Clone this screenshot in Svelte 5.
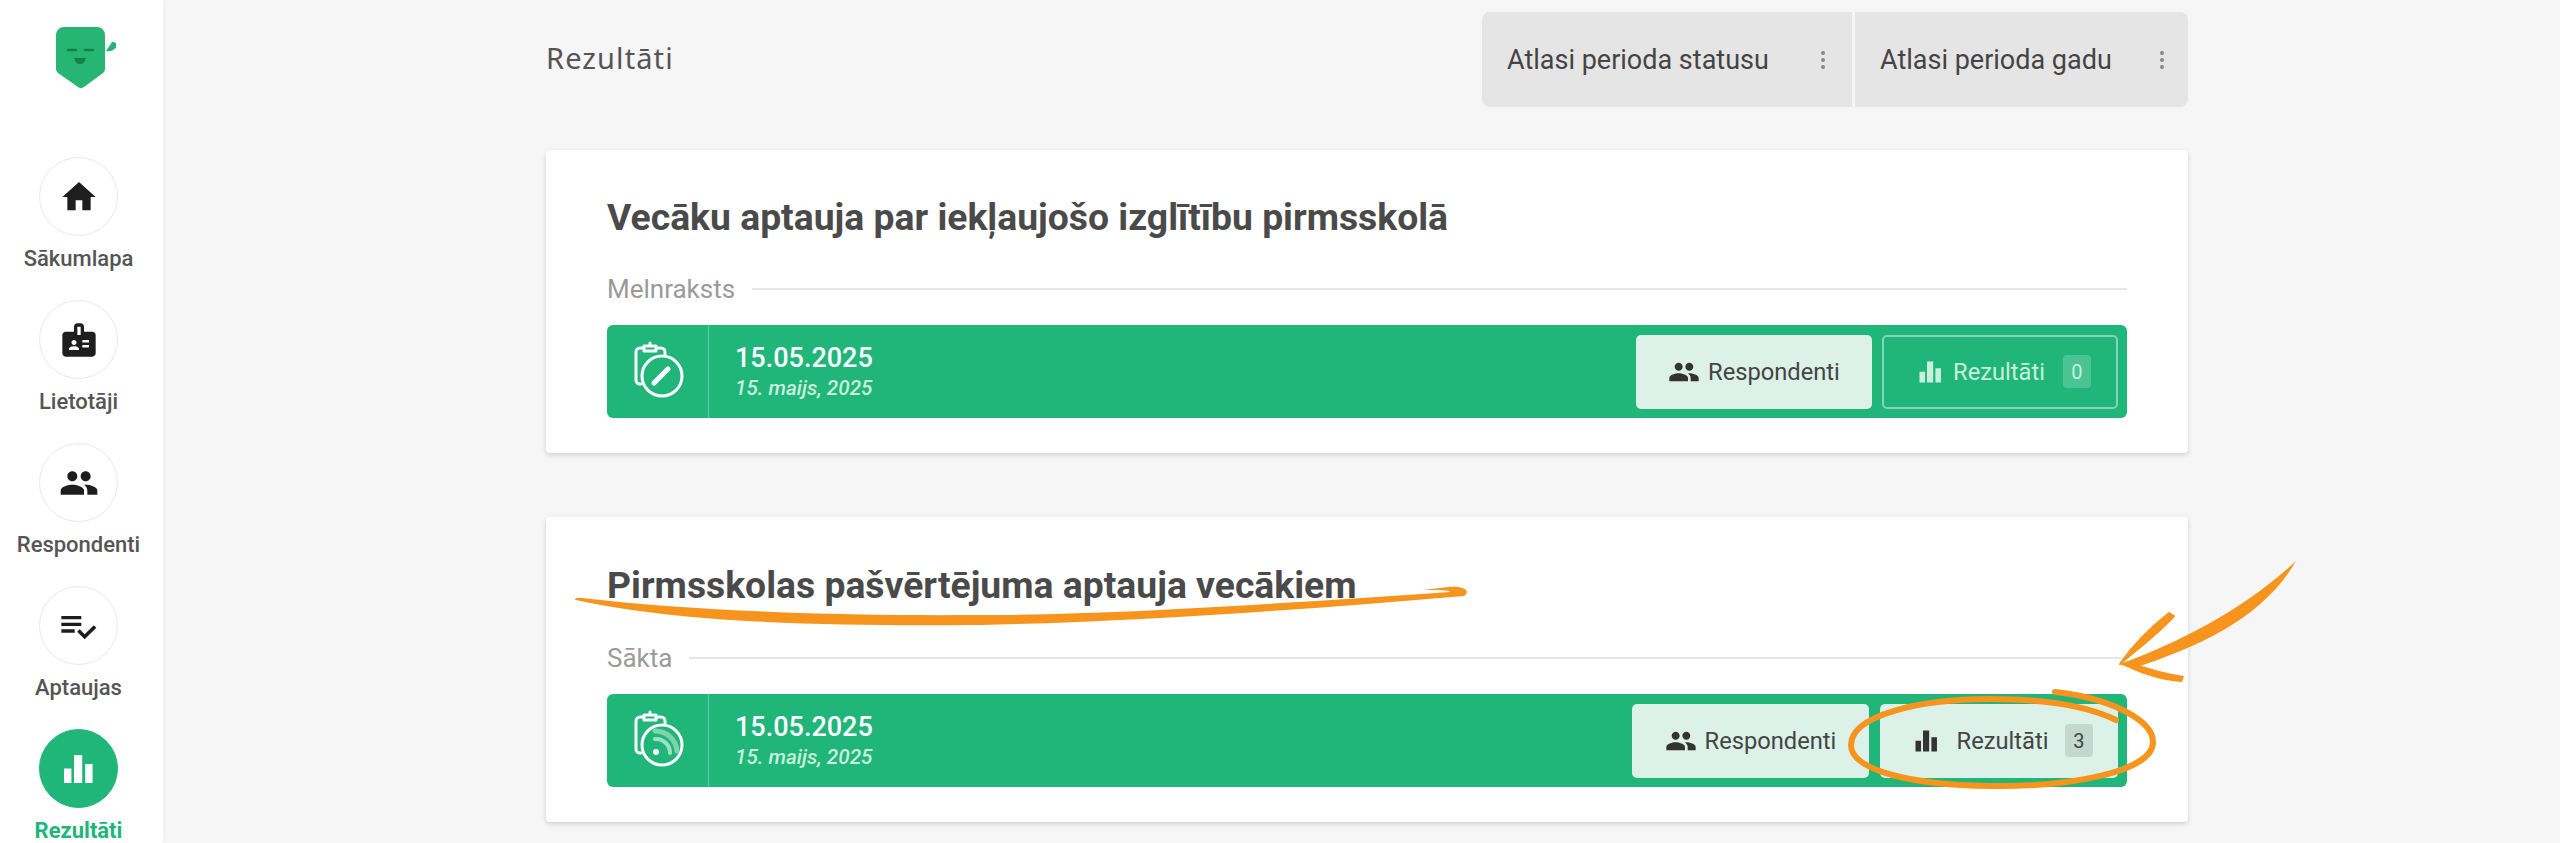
<script>
  const chart = 'M5 11.8h3.7V19H5zM10 5h4.1v14H10zM15.6 9.5h3.7V19h-3.7z'
  const people = 'M16 11c1.66 0 2.99-1.34 2.99-3S17.66 5 16 5c-1.66 0-3 1.34-3 3s1.34 3 3 3zm-8 0c1.66 0 2.99-1.34 2.99-3S9.66 5 8 5C6.34 5 5 6.34 5 8s1.34 3 3 3zm0 2c-2.33 0-7 1.17-7 3.5V19h14v-2.5c0-2.33-4.67-3.5-7-3.5zm8 0c-.29 0-.62.02-.97.05 1.16.84 1.97 1.97 1.97 3.45V19h6v-2.5c0-2.33-4.67-3.5-7-3.5z'

  const nav = [
    { label: 'Sākumlapa', d: 'M10 20v-6h4v6h5v-8h3L12 3 2 12h3v8z' },
    { label: 'Lietotāji', d: 'M20 7h-5V4c0-1.1-.9-2-2-2h-2c-1.1 0-2 .9-2 2v3H4c-1.1 0-2 .9-2 2v11c0 1.1.9 2 2 2h16c1.1 0 2-.9 2-2V9c0-1.1-.9-2-2-2zM9 12c.83 0 1.5.67 1.5 1.5S9.83 15 9 15s-1.5-.67-1.5-1.5S8.17 12 9 12zm3 6H6v-.75c0-1 2-1.5 3-1.5s3 .5 3 1.5V18zm1-9h-2V4h2v5zm5 7.5h-4V15h4v1.5zm0-3h-4V12h4v1.5z' },
    { label: 'Respondenti', d: people },
    { label: 'Aptaujas', d: 'M14 10H2v2h12v-2zm0-4H2v2h12V6zM2 16h8v-2H2v2zm19.5-4.5L23 13l-6.99 7-4.51-4.5L13 14l3.01 3 5.49-5.5z' },
    { label: 'Rezultāti', d: chart, active: true }
  ]

  const surveys = [
    { title: 'Vecāku aptauja par iekļaujošo izglītību pirmsskolā', status: 'Melnraksts', kind: 'draft', count: 0 },
    { title: 'Pirmsskolas pašvērtējuma aptauja vecākiem', status: 'Sākta', kind: 'started', count: 3 }
  ]
</script>

<div class="page">
  <aside class="sidebar">
    <svg class="logo" viewBox="0 0 60 62" width="60" height="62" aria-hidden="true">
      <path d="M8 0h33a8 8 0 0 1 8 8v34a5 5 0 0 1-2 4L28 60a5 5 0 0 1-6 0L2 46a5 5 0 0 1-2-4V8a8 8 0 0 1 8-8z" fill="#26b573" />
      <path d="M50 24l6-9c3 0 5 1 5 4-2 4-6 6-11 5z" fill="#26b573" />
      <path d="M12 23h8M29 23h8" stroke="#17804f" stroke-width="2.4" stroke-linecap="round" fill="none" />
      <path d="M18 31h12c-1 4-3 6-6 6s-5-2-6-6z" fill="#17804f" />
    </svg>
    <nav>
      {#each nav as item}
        <a class="nav-item" class:active={item.active} href="#top">
          <span class="circle">
            <svg viewBox="0 0 24 24" aria-hidden="true"><path d={item.d} /></svg>
          </span>
          <span class="nav-label">{item.label}</span>
        </a>
      {/each}
    </nav>
  </aside>

  <main>
    <header>
      <h1>Rezultāti</h1>
      <div class="filters">
        <button class="filter status">Atlasi perioda statusu <i class="dots"></i></button>
        <button class="filter year">Atlasi perioda gadu <i class="dots"></i></button>
      </div>
    </header>

    {#each surveys as s}
      <section class="card" class:started={s.kind === 'started'}>
        <h2>{s.title}</h2>
        <div class="status-row">
          <span>{s.status}</span>
          <hr />
        </div>
        <div class="bar">
          <div class="bar-icon">
            <svg viewBox="0 0 60 60" width="60" height="60" fill="none" stroke="#fff" stroke-width="3" stroke-linecap="round" stroke-linejoin="round" aria-hidden="true">
              <path d="M11 45H10a4 4 0 0 1-4-4V13a4 4 0 0 1 4-4h3M27 9h4a4 4 0 0 1 4 4v2" />
              <path d="M14 7h12v5H14zM20 6V4" />
              <circle cx="32" cy="37" r="20" />
              {#if s.kind === 'draft'}
                <path d="M24 44l14-14" stroke-width="5" />
              {:else}
                <path d="M25 31a14 14 0 0 1 15 14" stroke="#9fe0c2" stroke-width="4" />
                <path d="M25 23a22 22 0 0 1 22 20" stroke="#7fd4ac" stroke-width="5" />
                <circle cx="26" cy="44" r="3" fill="#fff" stroke="none" />
              {/if}
            </svg>
          </div>
          <div class="dates">
            <strong>15.05.2025</strong>
            <em>15. maijs, 2025</em>
          </div>
          <div class="actions">
            <button class="btn solid resp">
              <svg class="ico-people" viewBox="0 0 24 24" aria-hidden="true"><path d={people} /></svg>
              Respondenti
            </button>
            <button class="btn res" class:solid={s.count > 0} class:outline={s.count === 0}>
              <svg class="ico-chart" viewBox="0 0 24 24" aria-hidden="true"><path d={chart} /></svg>
              <span class="res-label">Rezultāti</span>
              <span class="badge">{s.count}</span>
            </button>
          </div>
        </div>
      </section>
    {/each}
  </main>

  <!-- hand drawn marks on top of the screenshot -->
  <svg class="marks" viewBox="0 0 2560 843" width="2560" height="843" aria-hidden="true">
    <path d="M576 600C690 625 850 626 980 625C1130 622 1300 610 1464 596C1472 590 1462 586 1448 587L1423 590C1435 590 1450 590 1450 592C1300 602 1120 615 980 615C850 616 700 612 582 598C575 597 574 600 576 600z" fill="#f7941d" />
    <path d="M2296 561C2265 615 2205 645 2134 668L2120 664C2185 640 2245 608 2296 561z" fill="#f7941d" />
    <path d="M2120 664C2140 673 2160 681 2182 682L2184 676C2165 673 2145 668 2130 661z" fill="#f7941d" />
    <path d="M2120 664C2136 650 2160 632 2174 616L2169 613C2150 628 2133 645 2120 664z" fill="#f7941d" stroke="#f7941d" stroke-width="2" stroke-linejoin="round" />
    <path d="M2055 692C2110 698 2153 720 2153 742C2153 772 2070 787 1990 786C1910 785 1851 770 1851 745C1851 715 1920 699 1990 699C2040 699 2085 705 2116 720" fill="none" stroke="#f7941d" stroke-width="6" stroke-linecap="round" />
  </svg>
</div>

<style>
  :global(body) {
    margin: 0;
    background: #f6f6f6;
    overflow: hidden;
  }
  .page {
    position: relative;
    display: flex;
    height: 843px;
    overflow: hidden;
    font-family: Roboto, sans-serif;
    color: #4a4a4a;
  }
  .sidebar {
    flex: 0 0 163px;
    background: #fff;
    box-shadow: 2px 0 4px rgba(0, 0, 0, 0.03);
    display: flex;
    flex-direction: column;
    align-items: center;
    padding: 27px 6px 0 0;
    box-sizing: border-box;
  }
  .logo {
    margin-left: 14px;
    display: block;
    flex: none;
  }
  nav {
    margin-top: 68px;
    display: flex;
    flex-direction: column;
    gap: 23px;
    align-items: center;
  }
  .nav-item {
    display: flex;
    flex-direction: column;
    align-items: center;
    text-decoration: none;
    color: #555;
    height: 120px;
  }
  .circle {
    width: 79px;
    height: 79px;
    box-sizing: border-box;
    border: 1.5px solid #e9e9e9;
    border-radius: 50%;
    display: flex;
    align-items: center;
    justify-content: center;
    flex: none;
  }
  .circle svg {
    width: 40px;
    height: 40px;
    fill: #1e1e1e;
  }
  .nav-label {
    margin-top: 10px;
    font-size: 22px;
    line-height: 26px;
    font-weight: 500;
    white-space: nowrap;
  }
  .nav-item.active {
    color: #20b579;
  }
  .nav-item.active .circle {
    background: #20b579;
    border-color: #20b579;
  }
  .nav-item.active .circle svg {
    width: 48px;
    height: 48px;
    fill: #fff;
  }
  .nav-item.active .nav-label {
    font-weight: 700;
  }
  main {
    margin-left: 383px;
    width: 1642px;
    flex: none;
  }
  header {
    height: 150px;
    display: flex;
    justify-content: space-between;
    align-items: flex-start;
    padding-top: 12px;
    box-sizing: border-box;
  }
  h1 {
    margin: 27px 0 0;
    font: 400 29px/38px "Noto Sans", sans-serif;
    letter-spacing: 1.1px;
    color: #555;
  }
  .filters {
    display: flex;
    gap: 3px;
  }
  .filter {
    height: 95px;
    border: 0;
    background: #e5e5e5;
    font: 400 27px Roboto, sans-serif;
    color: #444;
    display: flex;
    align-items: center;
    padding: 0 0 0 25px;
    margin: 0;
    white-space: nowrap;
  }
  .filter.status {
    width: 370px;
    border-radius: 8px 0 0 8px;
  }
  .filter.year {
    width: 333px;
    border-radius: 0 8px 8px 0;
  }
  .dots {
    width: 4px;
    height: 4px;
    border-radius: 50%;
    background: #888;
    box-shadow: 0 -7px 0 #888, 0 7px 0 #888;
    margin-left: 52px;
  }
  .filter.year .dots {
    margin-left: 48px;
  }
  .card {
    background: #fff;
    border-radius: 4px;
    box-shadow: 0 2px 5px rgba(0, 0, 0, 0.16);
    height: 303px;
    margin-bottom: 64px;
    padding: 0 61px;
    box-sizing: border-box;
  }
  h2 {
    margin: 0;
    padding-top: 41px;
    font: 700 37.3px/52px Roboto, sans-serif;
    color: #4a4a4a;
  }
  .status-row {
    display: flex;
    align-items: center;
    gap: 17px;
    margin-top: 31px;
    height: 30px;
    color: #9a9a9a;
    font-size: 26px;
  }
  .status-row hr {
    flex: 1;
    margin: 0;
    border: 0;
    height: 2px;
    background: #e6e6e6;
  }
  .bar {
    margin-top: 21px;
    height: 93px;
    background: #20b579;
    border-radius: 6px;
    display: flex;
    align-items: stretch;
  }
  .bar-icon {
    width: 102px;
    flex: none;
    box-sizing: border-box;
    border-right: 1px solid rgba(255, 255, 255, 0.3);
    padding: 14px 0 0 23px;
  }
  .bar-icon svg {
    display: block;
  }
  .dates {
    padding: 17px 0 0 26px;
    display: flex;
    flex-direction: column;
  }
  .dates strong {
    font-size: 27px;
    line-height: 33px;
    font-weight: 500;
    color: #fff;
  }
  .dates em {
    font-size: 20.7px;
    line-height: 27px;
    font-weight: 500;
    color: #c9f0dc;
  }
  .actions {
    margin-left: auto;
    display: flex;
    align-items: center;
    gap: 10px;
    padding-right: 9px;
  }
  .btn {
    height: 74px;
    width: 236px;
    box-sizing: border-box;
    border: 0;
    border-radius: 5px;
    font: 400 23.7px Roboto, sans-serif;
    display: flex;
    align-items: center;
    justify-content: center;
    padding: 0;
  }
  .btn.res {
    padding-left: 3px;
  }
  .solid {
    background: #dcf2e8;
    color: #444;
  }
  .outline {
    background: transparent;
    border: 2px solid rgba(255, 255, 255, 0.45);
    color: #c9f0dc;
  }
  .btn svg {
    fill: currentColor;
    flex: none;
  }
  .ico-people {
    width: 32px;
    height: 32px;
    margin-right: 8px;
    fill: #333 !important;
  }
  .ico-chart {
    width: 36px;
    height: 36px;
    margin-right: 3px;
  }
  .res-label {
    margin-left: 2px;
  }
  .badge {
    width: 28px;
    height: 33px;
    border-radius: 4px;
    margin-left: 18px;
    background: rgba(255, 255, 255, 0.2);
    display: flex;
    align-items: center;
    justify-content: center;
    font-size: 20px;
  }
  .started .actions {
    gap: 11px;
  }
  .started .btn {
    width: 237px;
  }
  .started .res {
    width: 238px;
  }
  .started .res .ico-chart {
    margin-right: 10.5px;
    fill: #333;
  }
  .started .badge {
    margin-left: 16.5px;
    background: #c2d9d0;
  }
  .started.card {
    height: 305px;
  }
  .started .status-row {
    margin-top: 32px;
  }
  .started h2 {
    padding-top: 42px;
  }
  .marks {
    position: absolute;
    left: 0;
    top: 0;
    pointer-events: none;
  }
</style>
